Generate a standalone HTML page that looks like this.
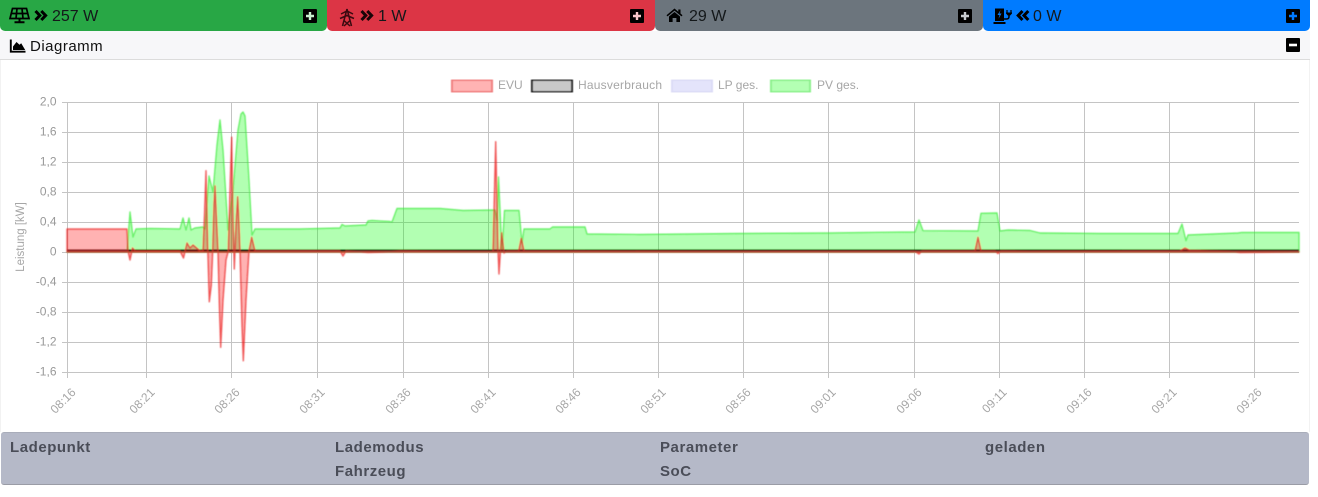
<!DOCTYPE html>
<html><head><meta charset="utf-8"><style>
html,body{margin:0;padding:0;background:#fff;width:1318px;height:497px;overflow:hidden;font-family:"Liberation Sans",sans-serif}
.b{position:absolute;top:0;height:31px;border-radius:0 0 5px 5px;color:#14181a;font-size:16px;line-height:31px}
.b span{position:absolute;top:1px;white-space:nowrap}
.t{position:absolute;font-weight:bold;font-size:15px;letter-spacing:.55px;color:#4a4d58;line-height:18px;white-space:nowrap}
svg{position:absolute;overflow:visible}
</style></head><body>
<div class="b" style="left:0;width:327px;background:#28a745"><span style="left:52px">257 W</span></div>
<div class="b" style="left:327px;width:328px;background:#dc3545"><span style="left:51px">1 W</span></div>
<div class="b" style="left:655px;width:328px;background:#6c757d"><span style="left:34px">29 W</span></div>
<div class="b" style="left:983px;width:327px;background:#007bff"><span style="left:50px">0 W</span></div>
<div style="position:absolute;left:0;top:31px;width:1310px;height:28px;background:#f7f7f9;border-bottom:1px solid #dcdcdc;font-size:15px;line-height:31px;color:#111"><span style="position:absolute;left:30px;letter-spacing:.5px">Diagramm</span></div>
<div style="position:absolute;left:0;top:60px;width:1310px;height:372px;border-left:1px solid #f2f2f2;border-right:1px solid #f2f2f2;box-sizing:border-box"></div>
<div style="position:absolute;left:1px;top:432px;width:1308px;height:53px;background:#b5b9c8;border-radius:3px;border-bottom:1px solid #9a9ca6;border-top:1px solid #a9adba;box-sizing:border-box"></div>
<div class="t" style="left:10px;top:439px">Ladepunkt</div>
<div class="t" style="left:335px;top:439px">Lademodus</div>
<div class="t" style="left:335px;top:463px">Fahrzeug</div>
<div class="t" style="left:660px;top:439px">Parameter</div>
<div class="t" style="left:660px;top:463px">SoC</div>
<div class="t" style="left:985px;top:439px">geladen</div>

<svg width="1318" height="497" viewBox="0 0 1318 497" style="left:0;top:0">
<defs><filter id="s" x="-2%" y="-2%" width="104%" height="104%"><feGaussianBlur stdDeviation="0.4"/></filter></defs>
<!-- plus / minus boxes -->
<g>
<rect x="303" y="9" width="14" height="14" rx="1" fill="#000"/><path d="M310 12v8M306 16h8" stroke="#c8f0d0" stroke-width="2.4"/>
<rect x="630" y="9" width="14" height="14" rx="1" fill="#000"/><path d="M637 12v8M633 16h8" stroke="#f8c8cc" stroke-width="2.4"/>
<rect x="958" y="9" width="14" height="14" rx="1" fill="#000"/><path d="M965 12v8M961 16h8" stroke="#c8ccd0" stroke-width="2.4"/>
<rect x="1286" y="9" width="14" height="14" rx="1" fill="#000"/><path d="M1293 12v8M1289 16h8" stroke="#007bff" stroke-width="2.4"/>
<rect x="1286" y="38" width="14" height="14" rx="1" fill="#000"/><path d="M1289 45h8" stroke="#fff" stroke-width="2.6"/>
</g>
<!-- solar -->
<g fill="none" stroke="#000" stroke-width="1.7">
<path d="M12.500 8.500h14l2.500 10h-19z"/><path d="M11 13.500h17M17 8.500l-1 10M22 8.500l1 10"/><path d="M19.500 18.500v3M14.500 22.300h10" stroke-width="2"/>
</g>
<!-- double chevrons -->
<g fill="none" stroke="#000" stroke-width="3">
<path d="M35.500 11l4.300 4.500-4.300 4.500M41.300 11l4.300 4.500-4.300 4.500"/>
<path d="M361.500 11l4.300 4.500-4.300 4.500M367.300 11l4.300 4.500-4.300 4.500" stroke="#1a0508"/>
<path d="M1022.500 11l-4.300 4.500 4.300 4.500M1028.300 11l-4.300 4.500 4.300 4.500"/>
</g>
<!-- pylon -->
<g fill="none" stroke="#3a0a10" stroke-width="1.5">
<path d="M347 9l-4.500 17M347 9l4.500 17M341 14l6-3 6 3M340 18.500l7-3 7 3M344 20.500l6 5.500M350 20.500l-6 5.500"/>
</g>
<!-- house -->
<path d="M674.500 8.500l3.800 3.200v-2.200h2.200v4l2 1.700-1 1.200-7-5.800-7 5.800-1-1.200zM669 16.500l5.500-4.500 5.500 4.500v5.500h-3.600v-4h-3.800v4H669z" fill="#000"/>
<!-- charger -->
<path d="M995 8.500h9v12.500h-9z" fill="#000"/><path d="M993.500 23h12" stroke="#000" stroke-width="2"/>
<path d="M1000.500 10l-3 5h2l-1 3.800 3-5.300h-2z" fill="#007bff"/>
<path d="M1004 19h2.500c1.800 0 2.500-1 2.500-2.500V15" fill="none" stroke="#000" stroke-width="1.500"/>
<path d="M1007 10v2.500M1011 10v2.500" stroke="#000" stroke-width="1.200"/><path d="M1006 12.500h6v1l-1.800 2h-2.400l-1.800-2z" fill="#000"/>
<!-- area chart icon -->
<path d="M10.800 39.500v12.200h14.700" fill="none" stroke="#000" stroke-width="1.900"/><path d="M13 50v-3.500l3.500-4.500 3 2.800 1.700-1.500 4 6.700z" fill="#000"/>

<!-- legend -->
<g stroke-width="2" filter="url(#s)">
<rect x="452" y="80" width="40" height="12" fill="#ffb3b3" stroke="#f08080"/>
<rect x="532" y="80" width="40" height="12" fill="#c9c9c9" stroke="#222"/>
<rect x="672" y="80" width="40" height="12" fill="#e4e4fb" stroke="#dcdcf6"/>
<rect x="771" y="80" width="39" height="12" fill="#b3ffb3" stroke="#8cf08c"/>
</g>
<g font-family="Liberation Sans,sans-serif" font-size="12" fill="#a6a6a6">
<text x="498" y="89">EVU</text><text x="578" y="89" textLength="84">Hausverbrauch</text><text x="718" y="89">LP ges.</text><text x="817" y="89">PV ges.</text>
</g>

<!-- grid -->
<g stroke="#c4c4c4" stroke-width="1" shape-rendering="crispEdges">
<path d="M62 102.500H1299M62 132.500H1299M62 162.500H1299M62 192.500H1299M62 222.500H1299M62 252.500H1299M62 282.500H1299M62 312.500H1299M62 342.500H1299M62 372.500H1299"/>
<path d="M67.500 102V378M146.500 102V378M231.500 102V378M317.500 102V378M403.500 102V378M488.500 102V378M573.500 102V378M658.500 102V378M743.500 102V378M828.500 102V378M914.500 102V378M999.500 102V378M1084.500 102V378M1169.500 102V378M1254.500 102V378"/>
</g>
<g font-family="Liberation Sans,sans-serif" font-size="12" fill="#999" text-anchor="end">
<text x="56.500" y="105.500">2,0</text><text x="56.500" y="135.500">1,6</text><text x="56.500" y="165.500">1,2</text><text x="56.500" y="195.500">0,8</text><text x="56.500" y="225.500">0,4</text><text x="56.500" y="255.500">0</text><text x="56.500" y="285.500">-0,4</text><text x="56.500" y="315.500">-0,8</text><text x="56.500" y="345.500">-1,2</text><text x="56.500" y="375.500">-1,6</text>
</g>
<text transform="translate(24,237) rotate(-90)" font-family="Liberation Sans,sans-serif" font-size="11.500" fill="#a6a6a6" text-anchor="middle">Leistung [kW]</text>
<g font-family="Liberation Sans,sans-serif" font-size="12" fill="#a6a6a6" text-anchor="end">
<text transform="translate(76.500,393) rotate(-45)">08:16</text>
<text transform="translate(155.500,393) rotate(-45)">08:21</text>
<text transform="translate(240.500,393) rotate(-45)">08:26</text>
<text transform="translate(325.500,393) rotate(-45)">08:31</text>
<text transform="translate(411.500,393) rotate(-45)">08:36</text>
<text transform="translate(496.500,393) rotate(-45)">08:41</text>
<text transform="translate(581.500,393) rotate(-45)">08:46</text>
<text transform="translate(666.500,393) rotate(-45)">08:51</text>
<text transform="translate(751.500,393) rotate(-45)">08:56</text>
<text transform="translate(836.500,393) rotate(-45)">09:01</text>
<text transform="translate(922.500,393) rotate(-45)">09:06</text>
<text transform="translate(1007.500,393) rotate(-45)">09:11</text>
<text transform="translate(1092.500,393) rotate(-45)">09:16</text>
<text transform="translate(1177.500,393) rotate(-45)">09:21</text>
<text transform="translate(1262.500,393) rotate(-45)">09:26</text>
</g>

<g filter="url(#s)">
<!-- PV -->
<path fill="rgba(0,255,0,.3)" stroke="rgba(60,235,60,.7)" stroke-width="1.400" stroke-linejoin="round" d="M67 252L127 252L130 212L133 237L136 229L150 228.500L180 229L183 218L186 230L189 218L191 230L195 228L203 227L205 229L209 176L213 192L217 145L220 120L223 150L228 230L233 190L238 130L241 114L243 112L245 116L249 180L252 235L255 229L300 229L340 228L342 224.500L345 226L366 225L368 221L372 220.500L390 221.500L392 222L397 208.500L440 208.500L463 210.500L495 210L497 220L498.500 177L502 252L504.500 210.500L519 210.500L522 243L524 229L550 229L552.500 227L585 227L587 234L640 234.500L740 233.500L830 233L880 232.300L915 232L919 220L923 230.700L978 231L981 213.300L997 213L1000 231L1008 230L1030 230.500L1040 233L1100 233.500L1178 233.500L1182 224L1186 240.700L1188 235L1238 233L1242 232.500L1299 232.500L1299 252Z"/>
<!-- Hausverbrauch -->
<path d="M67 250.500H1299" stroke="#111" stroke-width="2" fill="none"/>
<!-- EVU -->
<path fill="rgba(255,0,0,.3)" stroke="rgba(235,40,40,.7)" stroke-width="1.500" stroke-linejoin="round" d="M67 252L67 229L127 229L128 251L130 260L132.500 248L135 251L180 251L183.500 258L187 243L190 248L193 245L200 251L203 251L204.500 215L206 170.700L207.500 240L209.300 301.700L211.300 285L212.700 251L214 205L215 186L216.500 220L218 251L219.500 310L220.700 347.300L223 300L226 260L228.300 251L230.300 180L231.700 137.300L233 220L234.300 269L236 225L237.700 196.700L239 225L240 251L242 325L243.300 360.700L246 300L249 251L251.700 237.300L255 251L340 251L343 256L346 251L368 252.500L388 252L400 251L490 252L493 252L495.700 141.700L498 250L499 274L500.500 250L501.700 232.700L504 253L507 251L518.700 251L521.300 238.300L524 251L700 251.500L915 251.500L919 254L922 251L975 251L978 237.300L981 251L995 251L998 253.500L1001 251L1030 251.500L1180 251L1185 248L1190 250.500L1230 251.500L1240 252.500L1299 252L1299 252Z"/>
<path d="M67 251H127M255 251H340" stroke="#a82a2a" stroke-width="1.500" fill="none"/>
<path d="M346 251.300H1299" stroke="#a03030" stroke-width="1" fill="none"/>
</g>
</svg>
</body></html>
